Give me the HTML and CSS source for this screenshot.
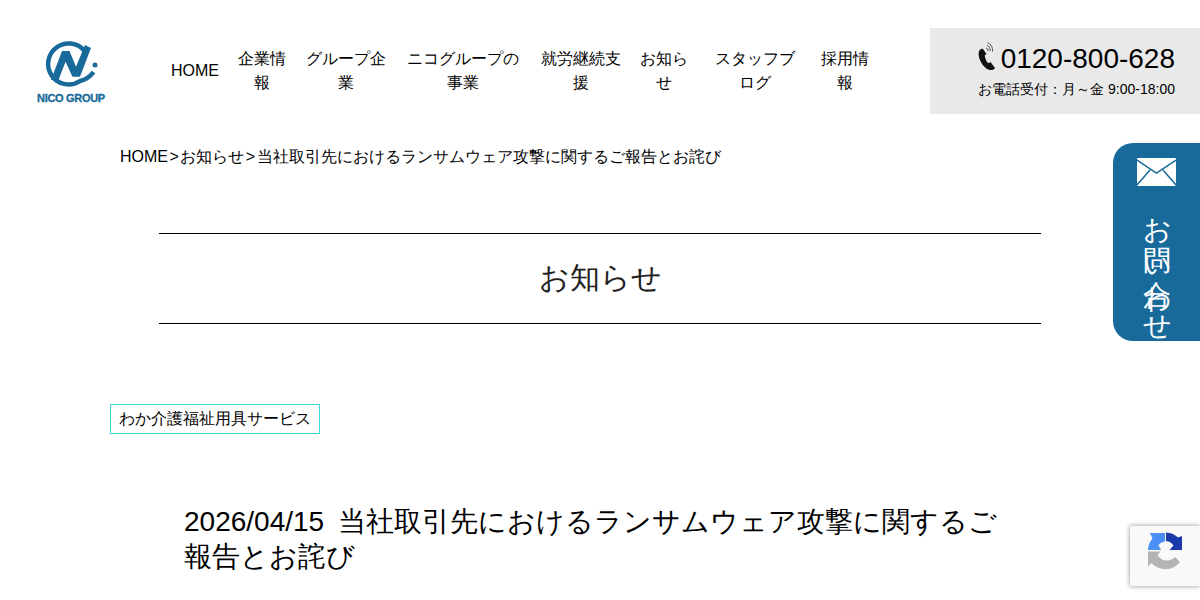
FILE: index.html
```html
<!DOCTYPE html>
<html>
<head>
  <meta charset="UTF-8">
  <title>お知らせ - NICO GROUP</title>
  <link rel="stylesheet" href="styles.css">
</head>
<body>
  <header class="header">
    <a class="logo" href="#">
      <svg width="70" height="54" viewBox="0 0 70 54">
        <path d="M48.500 13A20.500 20.500 0 1 0 44 43Q52.500 41 57.500 34" fill="none" stroke="#186a9b" stroke-width="4.500"/>
        <path d="M15 42L26 13H33.500L40 28.700 49 7l6 3L44 38.700h-7.500L29.500 23.700 22.500 42z" fill="#186a9b"/>
        <circle cx="59" cy="27" r="2.500" fill="#186a9b"/>
      </svg>
      <span class="logo-text">NICO GROUP</span>
    </a>
    <nav class="nav">
      <a class="nav-home" href="#">HOME</a>
      <a class="nav-w1" href="#">企業情報</a>
      <a class="nav-w2" href="#">グループ企業</a>
      <a class="nav-w3" href="#">ニコグループの事業</a>
      <a class="nav-w4" href="#">就労継続支援</a>
      <a class="nav-w5" href="#">お知らせ</a>
      <a class="nav-w6" href="#">スタッフブログ</a>
      <a class="nav-w1" href="#">採用情報</a>
    </nav>
    <div class="tel">
      <div class="tel-number">
        <svg class="tel-icon" width="18" height="28" viewBox="0 0 18 28">
          <path d="M3 7C1 8 0 11 1 15 2.500 21 7 27 12 28 14 28.500 16 27.500 17 26L12.500 20C11.500 21 10.500 21.500 9.500 20.500 8 18.500 7 16 6.800 14 6.800 13 7.500 12.500 8.500 12L5 7C4.500 6.500 3.500 6.500 3 7z" fill="#111"/>
          <path d="M8 6a2.500 2.500 0 0 1 2 3M9 3a6 6 0 0 1 3 6M9.500 .5a9 9 0 0 1 5 9" fill="none" stroke="#555" stroke-width="1"/>
        </svg>
        <span>0120-800-628</span>
      </div>
      <p class="tel-hours">お電話受付：月～金 9:00-18:00</p>
    </div>
  </header>

  <p class="breadcrumb"><a href="#">HOME</a><span class="sep">&gt;</span><a href="#">お知らせ</a><span class="sep">&gt;</span>当社取引先におけるランサムウェア攻撃に関するご報告とお詫び</p>

  <h1 class="page-title">お知らせ</h1>

  <div class="tag-row"><span class="tag">わか介護福祉用具サービス</span></div>

  <h2 class="post-title">2026/04/15&nbsp; 当社取引先におけるランサムウェア攻撃に関するご報告とお詫び</h2>

  <a class="contact" href="#">
    <svg width="39" height="28" viewBox="0 0 39 28">
      <rect width="39" height="28" rx="1" fill="#fff"/>
      <path d="M0 2l19.500 13L39 2M0 27l13-15M39 27L26 12" fill="none" stroke="#186a9b" stroke-width="1.500"/>
    </svg>
    <span class="contact-text">
      <span>お</span>
      <span class="pair">問<span class="over">い</span></span>
      <span class="pair">合<span class="over">わ</span></span>
      <span>せ</span>
    </span>
  </a>

  <div class="recaptcha">
    <svg width="38" height="38" viewBox="0 0 38 38">
      <path d="M19 .5A18.500 18.500 0 0 1 31 5.500L35 4V18H22.500L26.500 13.500A10 10 0 0 0 19 9z" fill="#1c3aa9"/>
      <path d="M1 18A18 18 0 0 1 5.500 6.500L3 1H18V9.500A10 10 0 0 0 11.500 13L14 18z" fill="#4a90f5"/>
      <path d="M1 19.500H13.500L10.500 23A11 11 0 0 0 28 25L33 30A18.500 18.500 0 0 1 4.500 31L1 34.500z" fill="#b4b4b4"/>
    </svg>
  </div>
</body>
</html>
```

FILE: styles.css
```css
body {
  font-family: "Liberation Sans", sans-serif;
  color: #000;
  background: #fff;
  margin: 0;
  height: 600px;
  overflow: hidden;
}
a {
  color: inherit;
  text-decoration: none;
}
.header {
  display: flex;
  align-items: center;
  margin-top: 28px;
  height: 86px;
}
.logo {
  width: 171px;
  padding-left: 36px;
  box-sizing: border-box;
  flex: none;
}
.logo svg {
  display: block;
}
.logo-text {
  display: block;
  margin-left: 1px;
  font-size: 11px;
  line-height: 12px;
  font-weight: bold;
  color: #186a9b;
  white-space: nowrap;
  letter-spacing: -0.300px;
  -webkit-text-stroke: 0.300px #186a9b;
}
.nav {
  display: flex;
  align-items: center;
  flex: 1;
  font-size: 16px;
  line-height: 24px;
  text-align: center;
}
.nav-home { width: 48px; margin-right: 19px; }
.nav-w1 { width: 48px; margin-right: 20px; }
.nav-w2 { width: 80px; margin-right: 21px; }
.nav-w3 { width: 112px; margin-right: 22px; }
.nav-w4 { width: 80px; margin-right: 19px; }
.nav-w5 { width: 48px; margin-right: 27px; }
.nav-w6 { width: 80px; margin-right: 26px; }
.tel {
  width: 270px;
  height: 86px;
  box-sizing: border-box;
  flex: none;
  background: #e9e9e9;
  padding: 14px 25px 0 0;
  text-align: right;
}
.tel-number {
  display: flex;
  justify-content: flex-end;
  align-items: center;
  font-size: 28px;
  line-height: 34px;
}
.tel-icon {
  align-self: flex-start;
  margin-right: 5px;
}
.tel-hours {
  margin: 3px 0 0;
  font-size: 14px;
  line-height: 20px;
}
.breadcrumb {
  margin: 32px 0 0 120px;
  font-size: 16px;
  line-height: 22px;
}
.sep {
  margin: 0 1.500px;
}
.page-title {
  margin: 65px 159px 0;
  height: 89px;
  border-top: 1px solid #000;
  border-bottom: 1px solid #000;
  font-size: 30px;
  font-weight: normal;
  line-height: 88px;
  text-align: center;
  color: #222;
}
.tag-row {
  margin: 80px 0 0 110px;
  display: flex;
}
.tag {
  border: 1px solid #3dd6d6;
  padding: 0 8px;
  font-size: 16px;
  line-height: 28px;
}
.post-title {
  margin: 70px 200px 0 184px;
  font-size: 28px;
  font-weight: normal;
  line-height: 35px;
  word-spacing: -1px;
}
.contact {
  position: absolute;
  top: 143px;
  right: 0;
  width: 87px;
  height: 198px;
  background: #186a9b;
  border-radius: 20px 0 0 20px;
  color: #fff;
  overflow: hidden;
}
.contact svg {
  display: block;
  margin: 15px 0 0 24px;
}
.contact-text {
  display: flex;
  flex-direction: column;
  align-items: center;
  width: 28px;
  margin: 29px 0 0 30px;
  font-size: 28px;
  line-height: 30px;
}
.pair {
  position: relative;
  margin-top: 1px;
}
.pair + .pair {
  margin-top: 5px;
}
.over {
  position: absolute;
  top: 3px;
  left: 0;
}
.recaptcha {
  position: absolute;
  top: 526px;
  right: 0;
  width: 70px;
  height: 60px;
  background: #f9f9f9;
  border-radius: 2px 0 0 2px;
  box-shadow: 0 0 5px rgba(0,0,0,0.45);
  padding: 6px 0 0 17px;
  box-sizing: border-box;
}
```
